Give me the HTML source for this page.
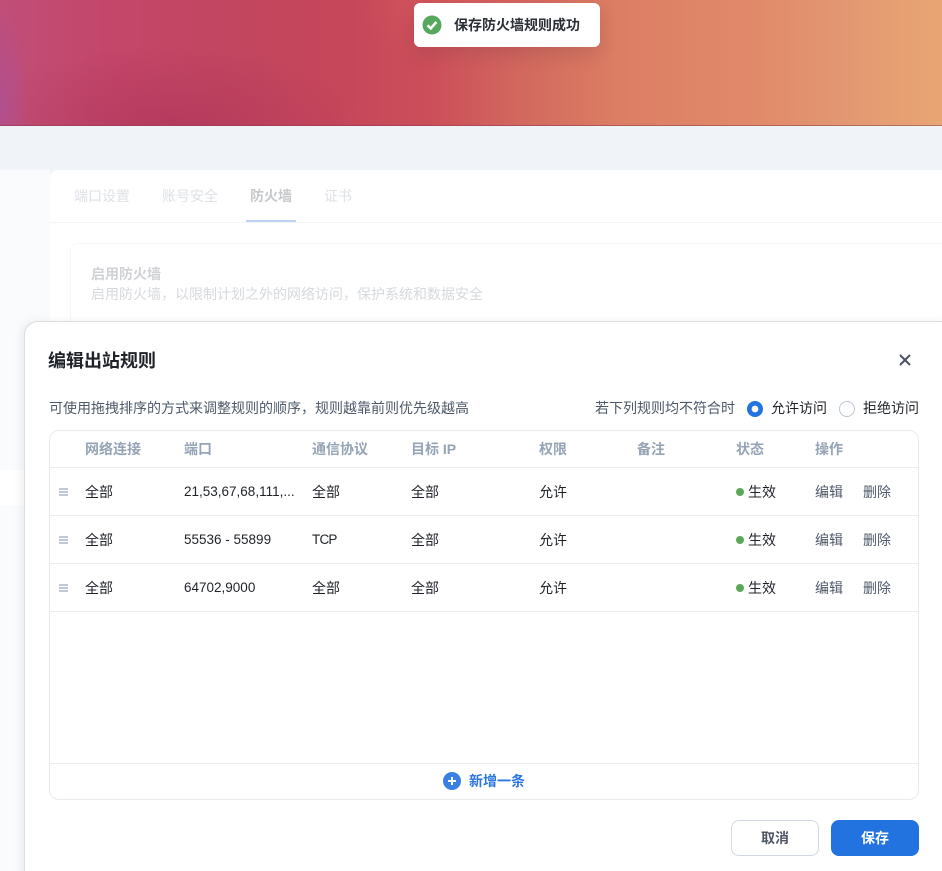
<!DOCTYPE html>
<html lang="zh-CN"><head><meta charset="utf-8"><title>编辑出站规则</title>
<style>
*{box-sizing:border-box}
html,body{margin:0;padding:0;width:942px;height:871px;overflow:hidden}
body{background:#f0f3f8;font-family:"Liberation Sans","Noto Sans CJK SC",sans-serif;font-size:14px;color:#1f2329}
#wrap{position:relative;width:942px;height:871px;overflow:hidden}
.a{position:absolute;white-space:nowrap}
#banner{left:0;top:0;width:942px;height:126px;border-bottom:1px solid rgba(120,50,70,.45);
background:
radial-gradient(ellipse 30px 100px at 0 105px,rgba(176,80,145,.95),rgba(176,80,145,0)),
radial-gradient(ellipse 190px 80px at 170px 125px,rgba(172,50,88,.6),rgba(172,50,88,0)),
radial-gradient(ellipse 110px 70px at 470px 5px,rgba(214,96,96,.6),rgba(214,96,96,0)),
linear-gradient(90deg,#c04e78 0,#c4466a 110px,#c24660 230px,#c6465a 340px,#cc4e5a 430px,#d2685e 520px,#dc7e64 620px,#e18a6a 760px,#e39872 850px,#e8a673 942px)}
#toast{left:414px;top:3px;width:186px;height:44px;background:#fff;border-radius:6px;box-shadow:0 8px 18px rgba(60,30,40,.14)}
#toast svg{position:absolute;left:8px;top:12px}
#toast span{position:absolute;left:40px;top:12px;font-size:14px;line-height:20px;font-weight:700;color:#2b2f36}
#side{left:0;top:170px;width:50px;height:701px;background:#fafbfd}
#band{left:0;top:470px;width:24px;height:35px;background:#fff}
#panel{left:50px;top:170px;width:892px;height:701px;background:#fff;border-radius:8px 0 0 0}
.tab{top:186px;font-size:14px;line-height:20px;color:#dde1e6}
#tabline{left:50px;top:222px;width:892px;height:1px;background:#f2f3f5}
#tabact{left:246px;top:220px;width:50px;height:2px;background:#bcd3f3}
#card{left:70px;top:243px;width:880px;height:120px;border:1px solid #f5f6f8;border-radius:8px}
#dlg{left:24px;top:321px;width:930px;height:570px;background:#fff;border:1px solid #dcdde0;border-radius:14px;box-shadow:-3px 0 8px rgba(120,125,135,.12)}
#title{left:48px;top:349px;font-size:18px;line-height:24px;font-weight:700;color:#1f2329}
#tbl{left:49px;top:430px;width:870px;height:370px;border:1px solid #e8eaf0;border-radius:10px}
.hl{left:50px;width:868px;height:1px;background:#e9ebf0}
.th{top:440px;font-size:14px;line-height:18px;font-weight:700;color:#95a3b6}
.td{font-size:14px;line-height:18px;color:#1f2329}
.n{font-size:13.5px}
.op{font-size:14px;line-height:18px;color:#4e5969}
.dot{width:8px;height:8px;border-radius:50%;background:#5aa85a}
.dr{left:59px;width:9px;height:8px;border-top:2px solid #c0c8d8;border-bottom:2px solid #c0c8d8}
.dr i{position:absolute;left:0;top:1px;width:9px;height:2px;background:#c0c8d8}
.btn{top:820px;width:88px;height:36px;border-radius:8px;text-align:center;font-size:14px;line-height:36px;font-weight:700}
</style></head><body><div id="wrap">
<div class="a" id="banner"></div>
<div class="a" id="side"></div><div class="a" id="band"></div>
<div class="a" id="panel"></div>
<div class="a tab" style="left:74px">端口设置</div>
<div class="a tab" style="left:162px">账号安全</div>
<div class="a tab" style="left:250px;color:#c6c8cc;font-weight:700">防火墙</div>
<div class="a tab" style="left:324px">证书</div>
<div class="a" id="tabline"></div><div class="a" id="tabact"></div>
<div class="a" id="card"></div>
<div class="a" style="left:91px;top:265px;font-size:14px;line-height:18px;font-weight:700;color:#cfd1d4">启用防火墙</div>
<div class="a" style="left:91px;top:285px;font-size:14px;line-height:18px;color:#d6d9dd">启用防火墙，以限制计划之外的网络访问，保护系统和数据安全</div>

<div class="a" id="dlg"></div>
<div class="a" id="title">编辑出站规则</div>
<svg class="a" style="left:898px;top:353px" width="14" height="14" viewBox="0 0 14 14"><path d="M2 2L12 12M12 2L2 12" stroke="#4a5362" stroke-width="2" fill="none"/></svg>
<div class="a" style="left:49px;top:399px;font-size:14px;line-height:18px;color:#4e5969">可使用拖拽排序的方式来调整规则的顺序，规则越靠前则优先级越高</div>
<div class="a" style="left:595px;top:399px;font-size:14px;line-height:18px;color:#4e5969">若下列规则均不符合时</div>
<svg class="a" style="left:747px;top:401px" width="16" height="16" viewBox="0 0 16 16"><circle cx="8" cy="8" r="8" fill="#2272e0"/><circle cx="8" cy="8" r="3.4" fill="#fff"/></svg>
<div class="a td" style="left:771px;top:399px">允许访问</div>
<svg class="a" style="left:839px;top:401px" width="16" height="16" viewBox="0 0 16 16"><circle cx="8" cy="8" r="7.5" fill="#fff" stroke="#bcc6d6"/></svg>
<div class="a td" style="left:863px;top:399px">拒绝访问</div>

<div class="a" id="tbl"></div>
<div class="a th" style="left:85px">网络连接</div>
<div class="a th" style="left:184px">端口</div>
<div class="a th" style="left:312px">通信协议</div>
<div class="a th" style="left:411px">目标 IP</div>
<div class="a th" style="left:539px">权限</div>
<div class="a th" style="left:637px">备注</div>
<div class="a th" style="left:736px">状态</div>
<div class="a th" style="left:815px">操作</div>
<div class="a hl" style="top:467px"></div>
<div class="a hl" style="top:515px"></div>
<div class="a hl" style="top:563px"></div>
<div class="a hl" style="top:611px"></div>
<div class="a hl" style="top:763px"></div>

<div class="a dr" style="top:488px"><i></i></div>
<div class="a td" style="left:85px;top:483px">全部</div>
<div class="a td n" style="left:184px;top:483px">21,53,67,68,111,...</div>
<div class="a td" style="left:312px;top:483px">全部</div>
<div class="a td" style="left:411px;top:483px">全部</div>
<div class="a td" style="left:539px;top:483px">允许</div>
<div class="a dot" style="left:736px;top:488px"></div>
<div class="a td" style="left:748px;top:483px">生效</div>
<div class="a op" style="left:815px;top:483px">编辑</div>
<div class="a op" style="left:863px;top:483px">删除</div>

<div class="a dr" style="top:536px"><i></i></div>
<div class="a td" style="left:85px;top:531px">全部</div>
<div class="a td n" style="left:184px;top:531px">55536 - 55899</div>
<div class="a td n" style="left:312px;top:531px;letter-spacing:-.8px">TCP</div>
<div class="a td" style="left:411px;top:531px">全部</div>
<div class="a td" style="left:539px;top:531px">允许</div>
<div class="a dot" style="left:736px;top:536px"></div>
<div class="a td" style="left:748px;top:531px">生效</div>
<div class="a op" style="left:815px;top:531px">编辑</div>
<div class="a op" style="left:863px;top:531px">删除</div>

<div class="a dr" style="top:584px"><i></i></div>
<div class="a td" style="left:85px;top:579px">全部</div>
<div class="a td n" style="left:184px;top:579px">64702,9000</div>
<div class="a td" style="left:312px;top:579px">全部</div>
<div class="a td" style="left:411px;top:579px">全部</div>
<div class="a td" style="left:539px;top:579px">允许</div>
<div class="a dot" style="left:736px;top:584px"></div>
<div class="a td" style="left:748px;top:579px">生效</div>
<div class="a op" style="left:815px;top:579px">编辑</div>
<div class="a op" style="left:863px;top:579px">删除</div>

<svg class="a" style="left:443px;top:772px" width="18" height="18" viewBox="0 0 18 18"><circle cx="9" cy="9" r="9" fill="#3a80e4"/><path d="M5 9H13M9 5V13" stroke="#fff" stroke-width="2"/></svg>
<div class="a" style="left:469px;top:772px;font-size:14px;line-height:18px;font-weight:700;color:#2a75e0">新增一条</div>

<div class="a btn" style="left:731px;background:#fff;border:1px solid #d2d9e3;line-height:34px;color:#4e5563">取消</div>
<div class="a btn" style="left:831px;background:#2272e0;color:#fff">保存</div>

<div class="a" id="toast">
<svg width="20" height="20" viewBox="0 0 20 20"><circle cx="10" cy="10" r="9.5" fill="#56a85c"/><path d="M5.6 10.3L8.8 13.4L14.4 7" stroke="#fff" stroke-width="2.6" fill="none"/></svg>
<span>保存防火墙规则成功</span>
</div>
</div></body></html>
